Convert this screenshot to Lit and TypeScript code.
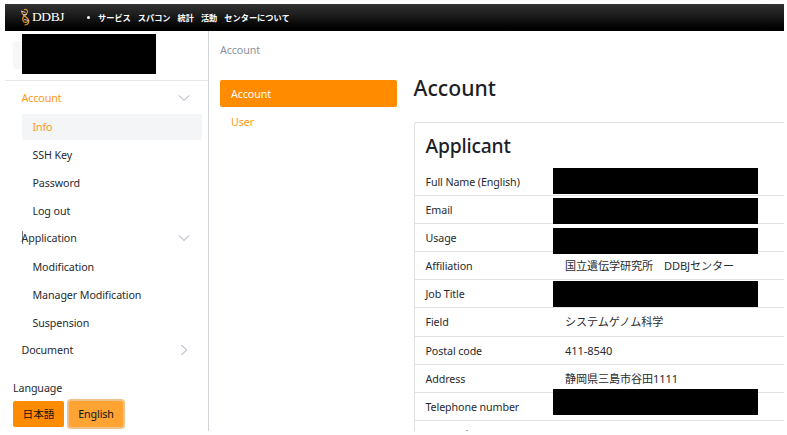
import { LitElement, html, css, svg, nothing } from "lit";
import { customElement } from "lit/decorators.js";
import { classMap } from "lit/directives/class-map.js";

interface Row {
  label: string;
  value?: string;
  masked?: string;
}

const ROWS: Row[] = [
  { label: "Full Name (English)", masked: "m0" },
  { label: "Email", masked: "m1" },
  { label: "Usage", masked: "m2" },
  { label: "Affiliation", value: "国立遺伝学研究所　DDBJセンター" },
  { label: "Job Title", masked: "m3" },
  { label: "Field", value: "システムゲノム科学" },
  { label: "Postal code", value: "411-8540" },
  { label: "Address", value: "静岡県三島市谷田1111" },
  { label: "Telephone number", masked: "m4" },
];

const chevron = (open: boolean) => html`<svg class="chev" width="12" height="12" viewBox="0 0 12 12" fill="none">
  ${open ? svg`<path d="M1 3.5 6 8.5 11 3.5" stroke="#9aa3af" />` : svg`<path d="M3.5 1 8.5 6 3.500 11" stroke="#9aa3af" />`}
</svg>`;

@customElement("app-root")
export class AppRoot extends LitElement {
  static styles = css`
    :host {
      display: block;
      width: 787px;
      height: 435px;
      box-sizing: border-box;
      padding: 4px 3px 4px 5px;
      background: #fff;
      overflow: hidden;
      color: #272b30;
      font: 10.7px/16px "Noto Sans", "Noto Sans CJK JP", sans-serif;
      letter-spacing: -0.1px;
      white-space: nowrap;
    }
    * { box-sizing: border-box; }
    header {
      height: 27px;
      display: flex;
      align-items: center;
      background: linear-gradient(#333, #000 90%);
      color: #fff;
      padding-left: 15px;
      padding-bottom: 1px;
    }
    .logo { display: block; width: 11px; height: 18px; }
    .brand { font: 13.5px/16px "Liberation Serif", serif; letter-spacing: -0.4px; width: 53px; padding-left: 1px; }
    .dot { width: 3px; height: 3px; border-radius: 50%; background: #fff; margin: 1px 8px 0 3px; }
    nav.top { display: flex; gap: 7px; font: bold 8.2px/16px "Noto Sans CJK JP", sans-serif; letter-spacing: 0; }
    .body { display: flex; height: 400px; overflow: hidden; }
    aside { width: 204px; border-right: 1px solid #d0d3d8; }
    .profile { height: 50px; border-bottom: 1px solid #e8e8ea; display: flex; padding: 3px 0 0 8px; }
    .avatar { width: 8.5px; height: 28px; margin-top: 7px; background: #f6f7f9; border-radius: 3px 0 0 3px; }
    .block { width: 134px; height: 40px; background: #000; }
    .group { display: flex; align-items: center; justify-content: space-between; padding: 0 18px 0 16.5px; }
    .group.g1 { height: 33px; padding-top: 1px; }
    .group.g2 { height: 25px; }
    .item { height: 28px; line-height: 28px; margin: 0 6px 0 16.5px; padding-left: 11px; }
    .item.sel { height: 26px; line-height: 26px; margin-bottom: 1px; background: #f4f5f7; border-radius: 2px; }
    .sub { padding-top: 3px; }
    .on { color: #ff980f; }
    .caret { display: flex; align-items: center; }
    .caret::before { content: ""; width: 1px; height: 13px; margin-right: -1px; background: #777; }
    .lang { padding: 18px 0 0 8px; }
    .btns { display: flex; gap: 5px; margin-top: 5px; }
    button {
      font: inherit; letter-spacing: inherit; color: #111; border: 0; padding: 0;
      width: 51px; height: 26px; background: #ff8c00; border-radius: 2px;
    }
    button.focus { width: 54px; background: #ffa333; box-shadow: 0 0 0 2px #efc18b; }
    .mid { width: 188px; padding-left: 11px; }
    .crumb { color: #8d939b; height: 49px; line-height: 38px; }
    .tab { height: 27px; line-height: 30px; padding-left: 11px; color: #ff980f; }
    .tab.active { width: 177px; line-height: 28px; background: #ff8c00; color: #fff; border-radius: 2px; }
    .main { flex: 1; margin-left: 16.5px; }
    h1 { margin: 43px 0 0; height: 48px; font: 500 21.2px/27px "Noto Sans", sans-serif; letter-spacing: 0; color: #1d2125; }
    h2 { margin: 0; height: 45px; padding-left: 11px; font: 500 19.3px/45px "Noto Sans", sans-serif; letter-spacing: -0.2px; color: #1d2125; }
    .card { border: 1px solid #dfe1e3; border-right: 0; border-bottom: 0; border-top-left-radius: 3px; height: 309px; }
    .row { position: relative; display: flex; height: 28.1px; line-height: 28px; padding-left: 11px; border-bottom: 1px solid #dfe1e3; }
    .label { width: 139.5px; }
    .value { font-family: "Noto Sans", "Noto Sans CJK JP", sans-serif; font-size: 11.1px; }
    .mask { position: absolute; left: 138px; width: 205.5px; height: 26px; background: #000; z-index: 1; }
    .m0 { top: 0; } .m1 { top: 2px; } .m2 { top: 4px; } .m3 { top: 1px; } .m4 { top: -4px; }
    .next { width: 2px; height: 1px; margin: 9px 0 0 51px; background: #aaa; }
  `;

  render() {
    const item = (t: string, sel = false) => html`<div class=${classMap({ item: true, sel, on: sel })}>${t}</div>`;
    return html`
      <header>
        <svg class="logo" viewBox="0 0 11 18" fill="none" stroke-width="1.2">
          <path d="M4 1.500C7 1 9 3.500 6.500 6S1.500 9 3 12.500 8 14 9 12" stroke="#d98a22" />
          <path d="M2 3C1 6 4 7.500 6.500 9.500S10 14 7 16.500L4.500 17" stroke="#e09a3a" />
          <path d="M1 3 5.500 4.500M3 7 7 6M4 11.500 8.500 12.500" stroke="#ddd" stroke-width=".9" />
        </svg>
        <span class="brand">DDBJ</span>
        <span class="dot"></span>
        <nav class="top"><span>サービス</span><span>スパコン</span><span>統計</span><span>活動</span><span>センターについて</span></nav>
      </header>
      <div class="body">
        <aside>
          <div class="profile"><div class="avatar"></div><div class="block"></div></div>
          <div class="group g1"><span class="on">Account</span>${chevron(true)}</div>
          ${item("Info", true)}${item("SSH Key")}${item("Password")}${item("Log out")}
          <div class="group g2"><span class="caret">Application</span>${chevron(true)}</div>
          <div class="sub">${item("Modification")}${item("Manager Modification")}${item("Suspension")}</div>
          <div class="group g2"><span>Document</span>${chevron(false)}</div>
          <div class="lang">
            <div>Language</div>
            <div class="btns"><button>日本語</button><button class="focus">English</button></div>
          </div>
        </aside>
        <div class="mid">
          <div class="crumb">Account</div>
          <div class="tab active">Account</div>
          <div class="tab">User</div>
        </div>
        <div class="main">
          <h1>Account</h1>
          <section class="card">
            <h2>Applicant</h2>
            ${ROWS.map((r) => html`<div class="row">
              <span class="label">${r.label}</span>
              ${r.value ? html`<span class="value">${r.value}</span>` : nothing}
              ${r.masked ? html`<div class="mask ${r.masked}"></div>` : nothing}
            </div>`)}
            <div class="next"></div>
          </section>
        </div>
      </div>
    `;
  }
}
